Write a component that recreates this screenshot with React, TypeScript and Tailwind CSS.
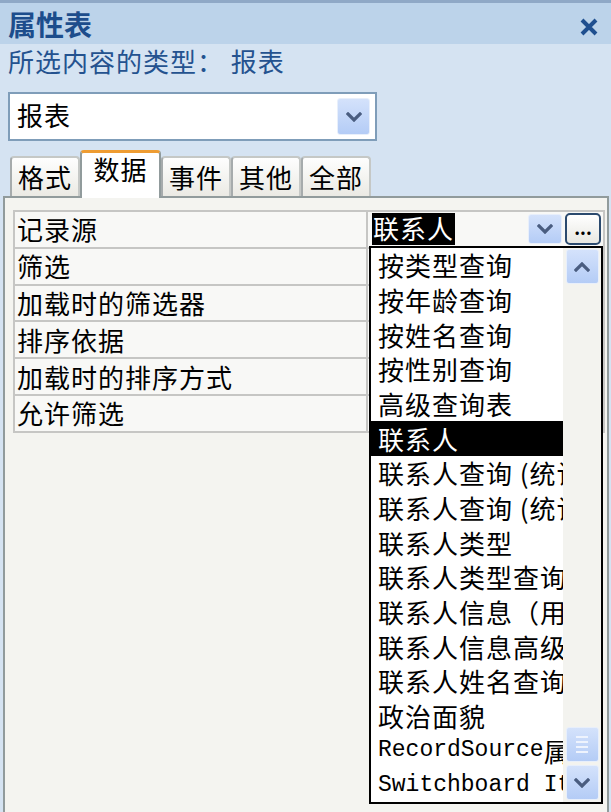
import React from 'react';

const listItems = [
  '按类型查询',
  '按年龄查询',
  '按姓名查询',
  '按性别查询',
  '高级查询表',
  '联系人',
  '联系人查询 (统计',
  '联系人查询 (统计',
  '联系人类型',
  '联系人类型查询',
  '联系人信息（用户',
  '联系人信息高级',
  '联系人姓名查询',
  '政治面貌',
];

const props = ['记录源', '筛选', '加载时的筛选器', '排序依据', '加载时的排序方式', '允许筛选'];

function Chevron({ up = false, className = '' }: { up?: boolean; className?: string }) {
  return (
    <svg width="16" height="10" viewBox="0 0 16 10" className={className}>
      <polyline
        points={up ? '2,8 8,2 14,8' : '2,2 8,8 14,2'}
        fill="none"
        stroke="#4a5d80"
        strokeWidth="3.2"
        strokeLinecap="square"
      />
    </svg>
  );
}

function BlueButton({ children, className = '' }: { children?: React.ReactNode; className?: string }) {
  return (
    <div
      className={`flex items-center justify-center rounded-[3px] border border-[#e8effb] bg-gradient-to-b from-[#d4e2fb] to-[#b4ccf6] ${className}`}
    >
      {children}
    </div>
  );
}

export default function App() {
  return (
    <div
      className="w-[611px] h-[812px] overflow-hidden flex flex-col bg-[#d5e3f2]"
      style={{ fontFamily: '"Noto Sans CJK SC", "Liberation Sans", sans-serif' }}
    >
      {/* Title bar */}
      <div className="h-[3px] bg-[#8fa8c6]" />
      <div className="h-[41px] bg-[#bcd3ea] flex items-center justify-between pl-[8px] pr-[12px]">
        <span className="text-[28px] font-bold leading-none text-[#1d4d8c]">属性表</span>
        <svg width="20" height="18" viewBox="0 0 20 18" className="mt-[6px]">
          <path d="M3 2 L17 16 M17 2 L3 16" stroke="#1f4f8f" strokeWidth="4" />
        </svg>
      </div>

      {/* Selection type */}
      <div className="h-[34px] flex items-center pl-[8px] text-[26px] tracking-[1px] leading-none text-[#24528f]">
        所选内容的类型：&nbsp;报表
      </div>

      {/* Combo */}
      <div className="mt-[14px] ml-[8px] w-[369px] h-[49px] border-2 border-[#7f9db9] bg-white flex items-center justify-between pl-[7px] pr-[5px]">
        <span className="text-[26px] tracking-[1px] leading-none text-black -mt-[4px]">报表</span>
        <BlueButton className="w-[33px] h-[37px]">
          <Chevron />
        </BlueButton>
      </div>

      {/* Tabs */}
      <div className="mt-[9px] h-[46px] flex items-end pl-[10px]">
        {['格式', '数据', '事件', '其他', '全部'].map((t) =>
          t === '数据' ? (
            <div
              key={t}
              className="relative z-10 -mb-[2px] w-[81px] h-[48px] bg-white border-x-2 border-[#919b9c] border-t-[3px] border-t-[#ee9c32] rounded-t-[4px] flex items-start justify-center pt-[3px] text-[26px] tracking-[1px] leading-none text-black"
            >
              {t}
            </div>
          ) : (
            <div
              key={t}
              className="w-[70px] h-[40px] bg-gradient-to-b from-[#fefefe] to-[#ebeae4] border-2 border-b-0 border-[#c5c8c6] border-l-[#a6abac] rounded-t-[4px] flex items-center justify-center text-[26px] tracking-[1px] leading-none text-black"
            >
              {t}
            </div>
          )
        )}
      </div>

      {/* Panel */}
      <div className="flex-1 ml-[3px] mr-[2px] border-2 border-b-0 border-[#919b9c] bg-[#f4f4f0] pt-[12px] pl-[8px] pr-[2px]">
        <div className="relative">
          <div className="border-t-2 border-[#c6c6c4]">
            {props.map((p, i) => (
              <div key={p} className="flex h-[36.8px] border-b-2 border-[#c6c6c4]">
                <div className="w-[355px] border-l-2 border-r-2 border-[#c6c6c4] bg-[#f8f8f6] flex items-center pl-[2px] text-[26px] tracking-[1px] leading-none text-black">
                  {p}
                </div>
                <div className="flex-1 border-r-2 border-[#c6c6c4] bg-[#f8f8f6] flex items-center">
                  {i === 0 && (
                    <>
                      <span className="ml-[4px] h-[32px] bg-black text-white text-[26px] tracking-[1px] leading-[30px] px-[1px]">联系人</span>
                      <div className="flex-1" />
                      <BlueButton className="w-[34px] h-[30px] mr-[3px]">
                        <Chevron />
                      </BlueButton>
                      <div className="w-[36px] h-[32px] mr-[2px] rounded-[5px] border-2 border-[#2b4a6e] bg-gradient-to-b from-[#ffffff] to-[#e8e8e2] flex items-center justify-center">
                        <span className="text-[18px] font-bold leading-none text-black -mt-[4px]">...</span>
                      </div>
                    </>
                  )}
                </div>
              </div>
            ))}
          </div>

          {/* Dropdown list */}
          <div className="absolute left-[356px] top-[36px] w-[234px] h-[558px] border-2 border-black bg-white flex">
            <div className="w-[192px] overflow-hidden">
              {listItems.map((item, i) => (
                <div
                  key={i}
                  className={`h-[34.67px] flex items-center pl-[7px] whitespace-nowrap text-[26px] tracking-[1px] leading-none ${
                    i === 5 ? 'bg-black text-white' : 'text-black'
                  }`}
                >
                  {item}
                </div>
              ))}
              <div className="h-[34.67px] flex items-center pl-[7px] whitespace-nowrap text-[26px] leading-none text-black">
                <span className="text-[23px]" style={{ fontFamily: '"Liberation Mono", monospace' }}>RecordSource</span>
                属性
              </div>
              <div className="h-[34.67px] flex items-center pl-[7px] whitespace-nowrap text-[23px] leading-none text-black" style={{ fontFamily: '"Liberation Mono", monospace' }}>
                Switchboard Items
              </div>
            </div>
            <div className="flex-1 bg-[#f3f3ef] flex flex-col items-center pt-[1px] pb-[2px]">
              <BlueButton className="w-[33px] h-[35px]">
                <Chevron up />
              </BlueButton>
              <div className="flex-1" />
              <BlueButton className="w-[33px] h-[35px] mb-[3px]">
                <div className="flex flex-col gap-[3px]">
                  {[0, 1, 2, 3].map((k) => (
                    <div key={k} className="w-[12px] h-[2px] bg-[#eef3fd]" />
                  ))}
                </div>
              </BlueButton>
              <BlueButton className="w-[33px] h-[35px]">
                <Chevron />
              </BlueButton>
            </div>
          </div>
        </div>
      </div>
    </div>
  );
}
